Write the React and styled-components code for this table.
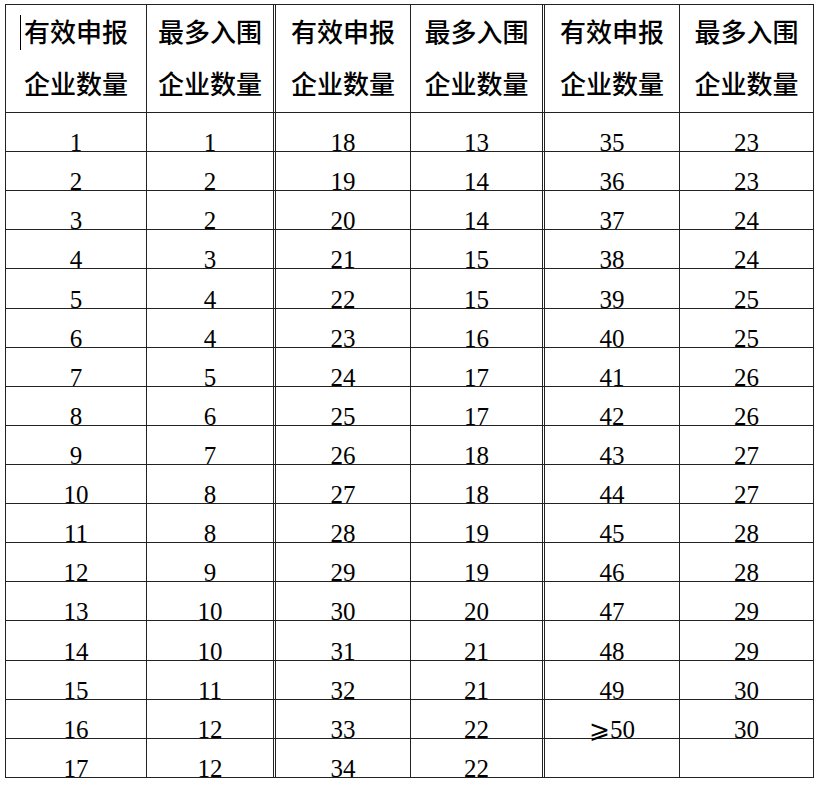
import React from "react";
import styled, { createGlobalStyle } from "styled-components";

const Global = createGlobalStyle`
  html, body { margin: 0; padding: 0; background: #fff; }
  body { font-family: "Liberation Serif", "Times New Roman", serif; color: #000; }
`;

const Page = styled.div`
  padding: 4px 0 0 5px;
`;

const Grid = styled.div`
  display: grid;
  grid-template-columns: 141px 129px 135px 134px 135px 134px;
  grid-template-rows: 108px repeat(17, 39.12px);
  width: max-content;
  border-left: 1px solid #222;
  border-top: 1px solid #222;
`;

const Cell = styled.div`
  box-sizing: border-box;
  border-bottom: 1px solid #222;
  border-right: ${(p) => (p.$double ? "3px double #222" : "1px solid #222")};
  display: flex;
  justify-content: center;
  align-items: ${(p) => (p.$head ? "center" : "flex-end")};
  min-width: 0;
`;

const HeadText = styled.div`
  position: relative;
  font-family: "Noto Sans CJK SC", "Noto Sans", sans-serif;
  font-size: 26px;
  font-weight: 500;
  line-height: 52px;
  text-align: center;
  color: #000;
  white-space: nowrap;
  padding-bottom: 4px;
`;

const Caret = styled.span`
  position: absolute;
  left: -4px;
  top: 10px;
  width: 1px;
  height: 35px;
  background: #000;
`;

const Num = styled.span`
  font-family: "Liberation Serif", "Times New Roman", serif;
  font-size: 25px;
  line-height: 17px;
  white-space: nowrap;
  color: #000;
`;

const col1 = Array.from({ length: 17 }, (_, i) => String(i + 1));
const col2 = [1, 2, 2, 3, 4, 4, 5, 6, 7, 8, 8, 9, 10, 10, 11, 12, 12].map(String);
const col3 = Array.from({ length: 17 }, (_, i) => String(i + 18));
const col4 = [13, 14, 14, 15, 15, 16, 17, 17, 18, 18, 19, 19, 20, 21, 21, 22, 22].map(String);
const col5 = [...Array.from({ length: 15 }, (_, i) => String(i + 35)), "⩾50", ""];
const col6 = [23, 23, 24, 24, 25, 25, 26, 26, 27, 27, 28, 28, 29, 29, 30, 30].map(String).concat([""]);

const cols = [col1, col2, col3, col4, col5, col6];
const headers = [
  ["有效申报", "企业数量"],
  ["最多入围", "企业数量"],
  ["有效申报", "企业数量"],
  ["最多入围", "企业数量"],
  ["有效申报", "企业数量"],
  ["最多入围", "企业数量"],
];

export default function App() {
  return (
    <Page>
      <Global />
      <Grid>
        {headers.map((h, i) => (
          <Cell key={"h" + i} $head $double={i === 1 || i === 3}>
            <HeadText>
              {i === 0 && <Caret />}
              {h[0]}
              <br />
              {h[1]}
            </HeadText>
          </Cell>
        ))}
        {col1.map((_, r) =>
          cols.map((c, ci) => (
            <Cell key={r + "-" + ci} $double={ci === 1 || ci === 3}>
              <Num>{c[r]}</Num>
            </Cell>
          ))
        )}
      </Grid>
    </Page>
  );
}
